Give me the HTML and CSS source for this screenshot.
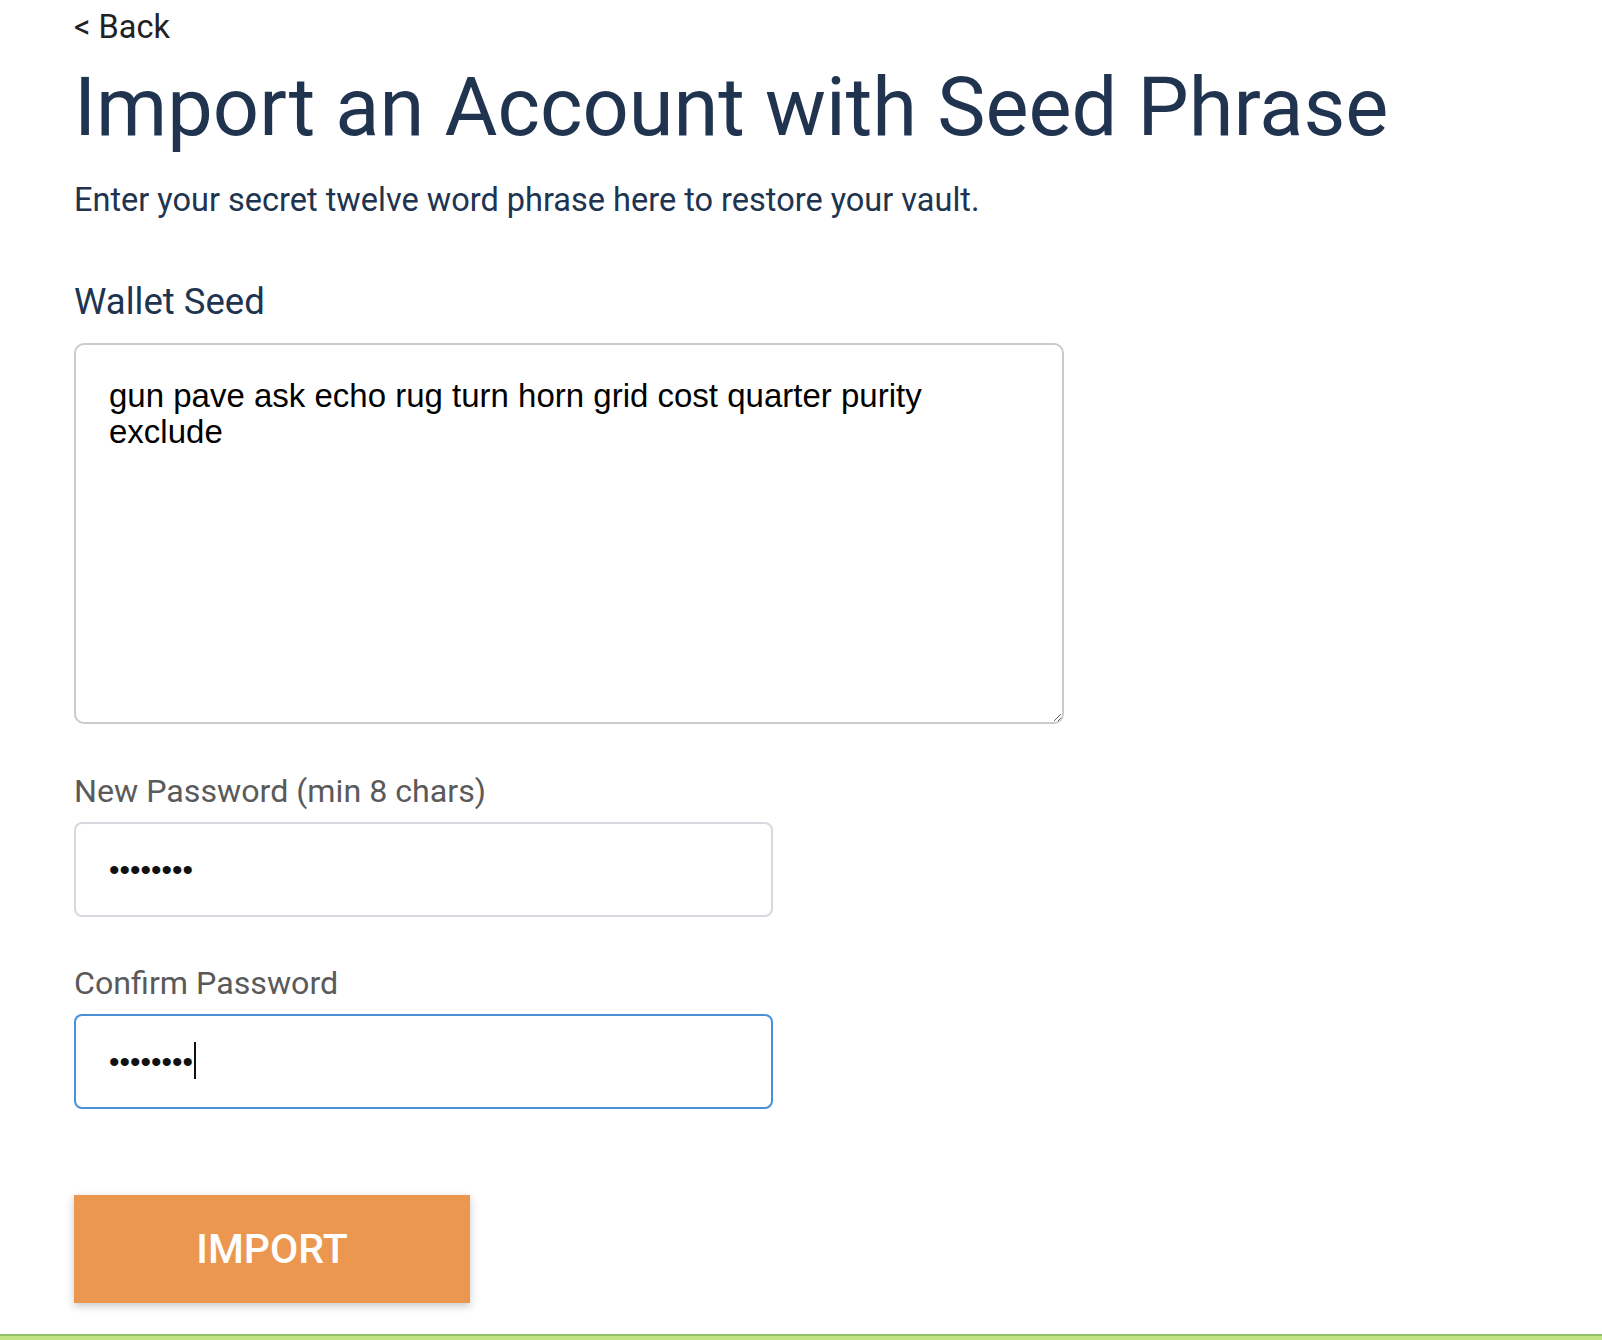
FILE: index.html
```html
<!DOCTYPE html>
<html>
<head>
<meta charset="utf-8">
<link rel="stylesheet" href="styles.css">
</head>
<body>
<main class="page">
  <a class="back" href="#">&lt; Back</a>
  <h1 class="title">Import an Account with Seed Phrase</h1>
  <p class="subtitle">Enter your secret twelve word phrase here to restore your vault.</p>
  <label class="seed-label" for="seed">Wallet Seed</label>
  <textarea id="seed" class="seed">gun pave ask echo rug turn horn grid cost quarter purity exclude</textarea>
  <label class="field-label first" for="pw1">New Password (min 8 chars)</label>
  <input id="pw1" class="pw" type="password" value="12345678">
  <label class="field-label second" for="pw2">Confirm Password</label>
  <div class="pw-wrap">
    <input id="pw2" class="pw pw-focus" type="password" value="12345678">
    <span class="caret"></span>
  </div>
  <button class="import" type="button">IMPORT</button>
</main>
<div class="footer-bar"></div>
</body>
</html>
```
FILE: styles.css
```css
html, body {
  margin: 0;
  padding: 0;
  background: #ffffff;
  overflow: hidden;
}
body {
  font-family: Roboto, "Liberation Sans", sans-serif;
}
.page {
  display: flex;
  flex-direction: column;
  align-items: flex-start;
  padding: 8px 0 0 74px;
  height: 1334px;
  box-sizing: border-box;
}
.back {
  font-size: 32.5px;
  line-height: 38px;
  color: #222222;
  text-decoration: none;
}
.title {
  margin: 14px 0 0 0;
  font-size: 81.2px;
  line-height: 96px;
  font-weight: 400;
  color: #203450;
}
.subtitle {
  margin: 25px 0 0 0;
  font-size: 32.5px;
  line-height: 38px;
  color: #203450;
}
.seed-label {
  margin-top: 62px;
  font-size: 36.5px;
  line-height: 42px;
  color: #203450;
}
.seed {
  margin-top: 20px;
  width: 990px;
  height: 381px;
  box-sizing: border-box;
  border: 2px solid #cbcbcb;
  border-radius: 10px;
  padding: 33px 60px 20px 33px;
  font-family: "Liberation Sans", Arial, sans-serif;
  font-size: 33px;
  line-height: 36px;
  color: #000000;
  outline: none;
}
.field-label {
  font-size: 32.2px;
  line-height: 38px;
  color: #5a5a5a;
}
.field-label.first {
  margin-top: 48px;
}
.field-label.second {
  margin-top: 47px;
}
.pw {
  margin-top: 12px;
  width: 699px;
  height: 95px;
  box-sizing: border-box;
  border: 2px solid #d6dadf;
  border-radius: 8px;
  padding: 0 33px;
  font-family: "Liberation Sans", Arial, sans-serif;
  font-size: 30px;
  color: #111111;
  outline: none;
  background: #ffffff;
}
.pw-wrap {
  position: relative;
  margin-top: 12px;
  display: flex;
}
.pw-wrap .pw {
  margin-top: 0;
}
.pw-focus {
  border-color: #4a90d9;
}
.caret {
  position: absolute;
  left: 120px;
  top: 28px;
  width: 2px;
  height: 37px;
  background: #111111;
}
.import {
  margin-top: 86px;
  width: 396px;
  height: 108px;
  border: none;
  border-radius: 0;
  background: #ec9750;
  color: #ffffff;
  font-family: Roboto, sans-serif;
  font-size: 41px;
  font-weight: 500;
  box-shadow: 0 3px 8px rgba(0, 0, 0, 0.22);
  cursor: pointer;
}
.footer-bar {
  height: 4px;
  background: #c2e383;
  border-top: 2px solid #95c266;
}
```
